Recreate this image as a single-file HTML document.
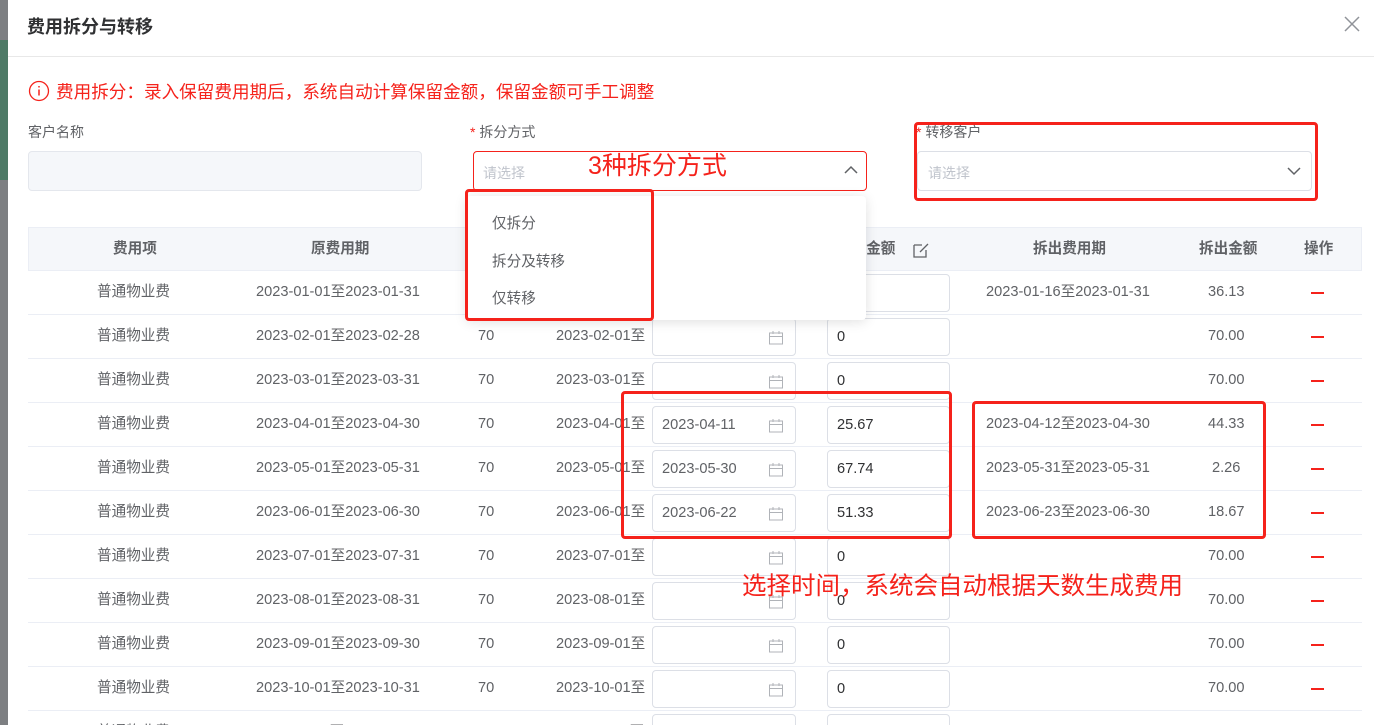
<!DOCTYPE html><html><head><meta charset="utf-8"><style>
*{margin:0;padding:0;box-sizing:border-box}
html,body{width:1374px;height:725px;overflow:hidden}
body{background:#fff;font-family:"Liberation Sans","Noto Sans CJK SC",sans-serif;font-size:14px;color:#606266;position:relative}
.a{position:absolute;white-space:nowrap}
.inp{position:absolute;border:1px solid #dcdfe6;border-radius:4px;background:#fff}
.row{position:absolute;left:28px;width:1334px;height:44px;border-bottom:1px solid #ebeef5;font-size:14.6px}
.c{position:absolute;top:13px;line-height:17px}
.rb{position:absolute;border:3px solid #f5221b;border-radius:4px}
.red{color:#f5221b}
</style></head><body>
<div class="a" style="left:0;top:0;width:8px;height:725px;background:#7d7f82"></div>
<div class="a" style="left:0;top:40px;width:8px;height:140px;background:#4e7a66"></div>
<div class="a" style="left:8px;top:56px;width:1366px;height:1px;background:#e8e8e8"></div>
<div class="a" style="left:27px;top:13px;font-size:18px;font-weight:bold;color:#303133">费用拆分与转移</div>
<svg class="a" style="left:1344px;top:16px" width="16" height="16"><path d="M1 1L15 15M15 1L1 15" stroke="#909399" stroke-width="1.5"/></svg>
<svg class="a" style="left:28px;top:80px" width="22" height="22"><circle cx="11" cy="11" r="9.5" fill="none" stroke="#f5221b" stroke-width="1.3"/><path d="M11 6v1.5M11 9.5v6" stroke="#f5221b" stroke-width="1.5"/></svg>
<div class="a red" style="left:56px;top:79px;font-size:17.6px">费用拆分：录入保留费用期后，系统自动计算保留金额，保留金额可手工调整</div>
<div class="a" style="left:28px;top:122px">客户名称</div>
<div class="a" style="left:470px;top:122px"><span class="red">*</span> 拆分方式</div>
<div class="a" style="left:916px;top:122px"><span class="red">*</span> 转移客户</div>
<div class="inp" style="left:28px;top:151px;width:394px;height:40px;background:#f5f7fa;border-color:#e4e7ed"></div>
<div class="inp" style="left:473px;top:151px;width:394px;height:40px;border-color:#f5221b"></div>
<div class="a" style="left:483px;top:163px;color:#c0c4cc">请选择</div>
<svg class="a" style="left:844px;top:165px" width="14" height="10"><path d="M1 8L7 2L13 8" fill="none" stroke="#606266" stroke-width="1.5"/></svg>
<div class="inp" style="left:917px;top:151px;width:395px;height:40px"></div>
<div class="a" style="left:928px;top:163px;color:#c0c4cc">请选择</div>
<svg class="a" style="left:1287px;top:166px" width="14" height="10"><path d="M1 2L7 8L13 2" fill="none" stroke="#606266" stroke-width="1.5"/></svg>
<div class="a" style="left:28px;top:227px;width:1334px;height:44px;background:#f5f7fa;border:1px solid #ebeef5;font-weight:bold;color:#606266;font-size:14.6px">
<div class="c" style="left:84px">费用项</div><div class="c" style="left:282px">原费用期</div><div class="c" style="left:438px">原</div>
<div class="c" style="left:808px">保留金额</div>
<svg class="a" style="left:883px;top:13px" width="18" height="18"><path d="M2 4h8M2 4v12h12V9M8 11l8-8" fill="none" stroke="#606266" stroke-width="1.3"/></svg>
<div class="c" style="left:1004px">拆出费用期</div><div class="c" style="left:1170px">拆出金额</div><div class="c" style="left:1275px">操作</div></div>
<div id="rows"></div>
<script>
var d=[["01-31","","1.67","2023-01-16至2023-01-31","36.13"],["02-28","","0","","70.00"],["03-31","","0","","70.00"],["04-30","2023-04-11","25.67","2023-04-12至2023-04-30","44.33"],["05-31","2023-05-30","67.74","2023-05-31至2023-05-31","2.26"],["06-30","2023-06-22","51.33","2023-06-23至2023-06-30","18.67"],["07-31","","0","","70.00"],["08-31","","0","","70.00"],["09-30","","0","","70.00"],["10-31","","0","","70.00"],["11-30","","","",""]];
var h="";d.forEach(function(r,i){var m=("0"+(i+1)).slice(-2);var t=271+i*44;
h+='<div class="row" style="top:'+t+'px"><div class="c" style="left:69px">普通物业费</div><div class="c" style="left:228px">2023-'+m+'-01至2023-'+r[0]+'</div><div class="c" style="left:450px">70</div><div class="c" style="left:528px;width:92px;overflow:hidden">2023-'+m+'-01至</div>'+
'<div class="inp" style="left:624px;top:3px;width:144px;height:38px"><span class="c" style="left:9px;top:10px;color:#606266">'+r[1]+'</span><svg class="a" style="left:115px;top:11px" width="16" height="16"><rect x="1.5" y="3" width="13" height="11" fill="none" stroke="#b0b3b8"/><path d="M1.5 6.5h13M5 1v3M11 1v3" stroke="#b0b3b8"/></svg></div>'+
'<div class="inp" style="left:799px;top:3px;width:123px;height:38px"><span class="c" style="left:9px;top:10px;color:#303133">'+r[2]+'</span></div>'+
'<div class="c" style="left:958px">'+r[3]+'</div><div class="c" style="left:'+(1200-r[4].length*4)+'px">'+r[4]+'</div><div class="a" style="left:1283px;top:21px;width:13px;height:2px;background:#f5221b"></div></div>';});
document.getElementById("rows").innerHTML=h;
</script>
<div class="a" style="left:466px;top:196px;width:400px;height:124px;background:#fff;box-shadow:0 2px 12px rgba(0,0,0,.12);border-radius:4px">
<div class="a" style="left:26px;top:16px;font-size:14.6px">仅拆分</div><div class="a" style="left:26px;top:54px;font-size:14.6px">拆分及转移</div><div class="a" style="left:26px;top:91px;font-size:14.6px">仅转移</div></div>
<div class="rb" style="left:465px;top:189px;width:189px;height:132px"></div>
<div class="rb" style="left:914px;top:122px;width:404px;height:79px"></div>
<div class="rb" style="left:621px;top:391px;width:331px;height:148px"></div>
<div class="rb" style="left:972px;top:401px;width:294px;height:138px"></div>
<div class="a red" style="left:588px;top:146px;font-size:25px">3种拆分方式</div>
<div class="a red" style="left:742px;top:567px;font-size:24.5px">选择时间，系统会自动根据天数生成费用</div>
</body></html>
